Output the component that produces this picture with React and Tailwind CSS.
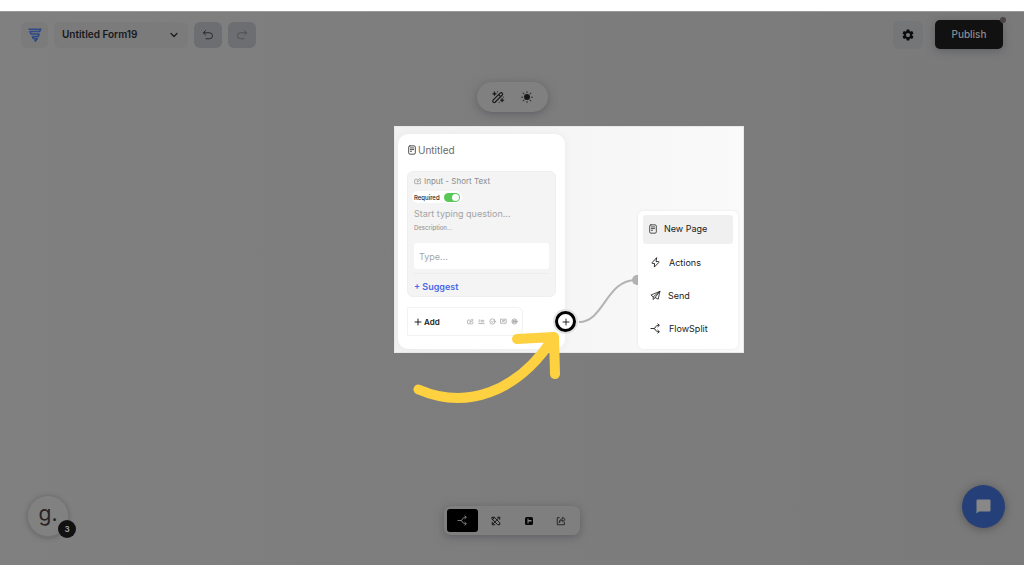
import { ChevronDown } from "lucide-react";
import { MdSettings } from "react-icons/md";
import { BsSunFill } from "react-icons/bs";

function Svg({ children, className = "", width = 1.8 }) {
  return (
    <svg viewBox="0 0 24 24" fill="none" stroke="currentColor" strokeWidth={width} strokeLinecap="round" strokeLinejoin="round" className={className} aria-hidden="true">
      {children}
    </svg>
  );
}

function LogoMark() {
  return (
    <svg viewBox="0 0 28 28" className="h-[14px] w-[14px]" fill="none" stroke="#2f4a86" strokeWidth="3.4" strokeLinejoin="round" aria-hidden="true">
      <path d="M1 2.500h26M24.500 2.500l-1 4.500H4l2 5h16l-1.500 5H9l1.500 4h8L15 26l-1.500-3" />
    </svg>
  );
}

function PageIcon({ className }) {
  return (
    <Svg className={className} width={2.2}>
      <rect x="4" y="2" width="16" height="20" rx="3" />
      <path d="M8 7h8M8 11h8M8 15h3" />
    </Svg>
  );
}

function EditIcon({ className }) {
  return (
    <Svg className={className} width={2}>
      <path d="M10 7H4a2 2 0 0 0-2 2v9a2 2 0 0 0 2 2h14a2 2 0 0 0 2-2v-5" />
      <path d="M10 14l1-4 7-6 3 3-7 6z" />
    </Svg>
  );
}

function WandIcon() {
  return (
    <Svg className="h-[14px] w-[14px]" width={2}>
      <path d="M3.500 17.500 16 5a2.500 2.500 0 0 1 3.500 3.500L7 21a2.500 2.500 0 0 1-3.500-3.500zM13 8l3.500 3.500" />
      <path d="M6 3l1 2.500L9.500 6.500 7 7.500 6 10 5 7.500 2.500 6.500 5 5.500zM19 14l1 2.500 2.500 1-2.500 1-1 2.500-1-2.500-2.500-1 2.500-1z" fill="currentColor" strokeWidth="0.8" />
      <path d="M11 3h.1M21 12h.1M14 21h.1" />
    </Svg>
  );
}

function SplitIcon({ className }) {
  return (
    <Svg className={className} width={2}>
      <path d="M2 12h7c3 0 3-7 8-7h2M9 12c3 0 3 7 8 7h2" />
      <path d="M17 2l3.500 3L17 8M17 16l3.500 3-3.500 3" />
    </Svg>
  );
}

function BoltIcon({ className }) {
  return (
    <Svg className={className} width={2}>
      <path d="M14 2 4.500 12.500c-.6.700-.2 1.500.7 1.500H10l-.5 8L19.500 11.500c.6-.7.2-1.500-.7-1.500H14z" />
    </Svg>
  );
}

function SendIcon({ className }) {
  return (
    <Svg className={className} width={1.8}>
      <path d="M21.500 3 2 11l5 4 14.500-12L18 20l-7-3.500L21.500 3M7 15v6l4-4.500" />
    </Svg>
  );
}

const actions = [
  { label: "Actions", Icon: BoltIcon, gap: "gap-2 pl-[7px]" },
  { label: "Send", Icon: SendIcon, gap: "gap-[7px] pl-[7px]" },
  { label: "FlowSplit", Icon: SplitIcon, gap: "gap-2 pl-[7px]" },
];

function Header() {
  return (
    <header className="flex items-center justify-between pt-[8px] pr-[21px] pl-[21px]">
      <div className="flex items-center gap-[6px]">
        <a href="#home" aria-label="Home" className="flex h-[26px] w-[27px] items-center justify-center rounded-[6px] bg-[#7b7b7b]">
          <LogoMark />
        </a>
        <button className="flex h-[26px] w-[134px] items-center justify-between rounded-[6px] bg-[#7b7b7b] pr-2 pl-2 text-[10px] font-semibold text-[#18181b]">
          Untitled Form19
          <ChevronDown className="h-3 w-3" strokeWidth={2.4} />
        </button>
        <button aria-label="Undo" className="flex h-[26px] w-[28px] items-center justify-center rounded-[6px] bg-[#6d6e71] text-[#222]">
          <Svg className="h-3 w-3"><path d="M7 3 3 7.500 7 12M3 7.500h12a6 6 0 0 1 0 12H8" /></Svg>
        </button>
        <button aria-label="Redo" className="flex h-[26px] w-[28px] items-center justify-center rounded-[6px] bg-[#6d6e71] text-[#4d4e50]">
          <Svg className="h-3 w-3"><path d="M17 3l4 4.500L17 12M21 7.500H9a6 6 0 0 0 0 12h7" /></Svg>
        </button>
      </div>
      <div className="flex items-center gap-3">
        <button aria-label="Settings" className="flex h-[28px] w-[30px] items-center justify-center rounded-[6px] bg-[#757678] text-[#0c0c0c]">
          <MdSettings className="h-[14px] w-[14px]" />
        </button>
        <button className="relative h-[29px] w-[68px] rounded-[5px] bg-[#111112] text-[10px] font-medium text-[#8c8c8c] shadow-[0_2px_8px_rgba(70,72,84,0.5)]">
          Publish
          <span className="absolute -top-[3px] -right-[3px] h-[6px] w-[6px] rounded-full bg-[#4b4346]" />
        </button>
      </div>
    </header>
  );
}

function FormCard() {
  return (
    <section className="mt-2 ml-1 w-[167px] rounded-[10px] bg-white px-[9px] pt-[8px] pb-[13px] shadow-[0_0_10px_rgba(0,0,0,0.05)]">
      <h2 className="flex h-4 items-center gap-px text-[10px] text-[#6a6a6a]">
        <PageIcon className="h-[10px] w-[10px] text-[#444]" />
        Untitled
      </h2>
      <div className="mt-[13px] h-[126px] rounded-[6px] border border-[#efefef] bg-[#f4f4f4] px-[6px] pt-[3px]">
        <div className="flex h-3 items-center gap-[2px] text-[8px] text-[#8c8c8c]">
          <EditIcon className="h-2 w-2" />
          Input - Short Text
        </div>
        <label className="mt-1 -ml-[2px] flex h-3 w-[50px] items-center gap-1 rounded-full bg-white pl-[2px] text-[6px] font-medium text-[#222]">
          Required
          <input type="checkbox" defaultChecked className="peer sr-only" />
          <span className="flex h-[9px] w-[16px] shrink-0 items-center justify-end rounded-full bg-[#58c856] px-px">
            <span className="h-[7px] w-[7px] rounded-full bg-white" />
          </span>
        </label>
        <input aria-label="Question" placeholder="Start typing question..." className="mt-1 block h-[13px] w-full bg-transparent text-[9px] placeholder:text-[#a3a3a3]" />
        <input aria-label="Description" placeholder="Description..." className="mt-[2px] block h-[10px] w-full bg-transparent text-[6px] font-medium placeholder:text-[#999]" />
        <input aria-label="Answer" placeholder="Type..." className="mt-[11px] block h-[26px] w-full rounded-[3px] bg-white px-[5px] text-[9px] placeholder:text-[#a6a6a6]" />
        <div className="mt-1 border-t border-[#ececec]" />
        <button className="mt-[6px] block text-[9px] leading-[14px] font-semibold text-[#4a67e8]">+ Suggest</button>
      </div>
      <div className="mt-[10px] flex h-[29px] w-[116px] items-center justify-between rounded-r-[6px] border border-[#f2f2f2] pr-1 pl-[6px]">
        <button className="flex items-center gap-[2px] text-[8px] font-semibold text-[#222]">
          <Svg className="h-2 w-2" width={3}><path d="M12 3v18M3 12h18" /></Svg>
          Add
        </button>
        <div className="flex items-center gap-1 text-[#888]">
          <EditIcon className="h-[7px] w-[7px]" />
          <Svg className="h-[7px] w-[7px]" width={2}><path d="M4 6v8M3 19h18M10 8h10M10 13h10" /></Svg>
          <Svg className="h-[7px] w-[7px]" width={2}><circle cx="12" cy="12" r="9" /><path d="m8 12 3 3 5-6" /></Svg>
          <Svg className="h-[7px] w-[7px]" width={2}><path d="M3 4h18v14h-6l-3 3-3-3H3zM8 9h8M8 13h6" /></Svg>
          <Svg className="h-[7px] w-[7px]" width={2}><circle cx="12" cy="12" r="9" /><path d="M8 8h8v8H8zM8 12h8" /></Svg>
        </div>
      </div>
    </section>
  );
}

function Flow() {
  return (
    <div className="absolute top-[114px] left-[calc(50%-118px)] h-[227px] w-[350px] border border-[#e9e9e9] bg-[#f7f7f7] bg-linear-to-r from-[#f2f2f2] to-[#fafafa]">
      <div className="-mt-px -ml-px flex">
        <FormCard />
      </div>
      <svg viewBox="394 126 350 300" className="absolute -top-px -left-px h-[300px] w-[350px]" fill="none" aria-hidden="true">
        <path d="M579 322C604 322 606 280 636 280" stroke="#b3b3b3" strokeWidth="2" />
        <circle cx="637" cy="280" r="5" fill="#b3b3b3" />
        <path d="M418.500 389.500C466 410 516 393 552 340M517 339l37-2 1 37" stroke="#fed141" strokeWidth="10" strokeLinecap="round" strokeLinejoin="round" />
      </svg>
      <button aria-label="Add step" className="absolute top-[184px] left-[160px] flex h-[21px] w-[21px] items-center justify-center rounded-full border-3 border-black bg-white text-black ring-2 ring-[#e2e2e2]">
        <Svg className="h-2 w-2 shrink-0" width={2.5}><path d="M12 3v18M3 12h18" /></Svg>
      </button>
      <nav className="absolute top-[84px] left-[243px] flex w-[100px] flex-col gap-1 rounded-[5px] bg-white px-[5px] pt-[4px] pb-[6px] text-[9px] text-[#222] shadow-[0_0_3px_rgba(0,0,0,0.08)]">
        <button className="flex h-[29px] items-center gap-[6px] rounded-[3px] bg-[#f0f0f0] pb-px pl-[5px]">
          <PageIcon className="h-[10px] w-[10px] text-[#444]" />
          New Page
        </button>
        {actions.map(({ label, Icon, gap }) => (
          <button key={label} className={`flex h-[29px] items-center ${gap}`}>
            <Icon className="h-[11px] w-[11px]" />
            {label}
          </button>
        ))}
      </nav>
    </div>
  );
}

function Dock() {
  return (
    <nav className="flex items-center rounded-[7px] bg-[#7f7f7f] p-[3px] text-[#171717] shadow-[0_2px_9px_rgba(65,67,80,0.5)]">
      <button aria-label="Flow" className="flex h-[23px] w-[31px] items-center justify-center rounded-[3px] bg-black text-[#858585]">
        <SplitIcon className="h-[11px] w-[11px]" />
      </button>
      <button aria-label="Design" className="flex h-[23px] w-[35px] items-center justify-center">
        <Svg className="h-[10px] w-[10px]" width={2.4}><path d="M3 3h5l13 13v5h-5L3 8zM20 3 4 20M16 3h5v5M3 15v6h6M8 3l-3 5" /></Svg>
      </button>
      <button aria-label="Integrations" className="flex h-[23px] w-[31px] items-center justify-center">
        <svg viewBox="0 0 16 16" className="h-2 w-2" aria-hidden="true">
          <rect width="16" height="16" rx="3" fill="#080808" />
          <path d="M5 3h2v10H5zM7 6h6v3H7z" fill="#858585" />
        </svg>
      </button>
      <button aria-label="Share" className="flex h-[23px] w-[33px] items-center justify-center">
        <Svg className="h-[10px] w-[10px]" width={2}><path d="M8 4H3v17h17v-6M8 15c0-6 4-8 8-8V3l6 5.500-6 5v-3c-4 0-6 1-8 4.500z" /></Svg>
      </button>
    </nav>
  );
}

export default function App() {
  return (
    <div className="flex min-h-screen flex-col bg-white pt-[11px] pb-[11px] font-[Inter,'Open_Sans',sans-serif]">
      <main className="relative flex flex-1 flex-col border-t border-[#999] bg-linear-to-r from-[#808080] to-[#7a7a7a]">
        <Header />
        <div className="flex flex-1 flex-col items-center justify-between pt-[33px] pb-[30px]">
          <div className="flex h-[30px] w-[71px] items-center justify-center gap-4 rounded-full bg-[#808080] pr-px text-[#171717] shadow-[0_2px_9px_rgba(65,67,80,0.5)]">
            <button aria-label="Generate"><WandIcon /></button>
            <button aria-label="Theme"><BsSunFill className="h-[12px] w-[12px]" /></button>
          </div>
          <Dock />
        </div>
        <Flow />
        <button aria-label="Guide, 3 items" className="absolute bottom-[28px] left-[27px] flex h-[42px] w-[42px] items-center justify-center rounded-full border border-[#747474] bg-[#818181] pb-1 text-[21px] text-[#292323] shadow-[0_1px_5px_rgba(60,60,60,0.4)]">
          g.
          <span className="absolute -right-[8px] -bottom-[2px] flex h-[18px] w-[18px] items-center justify-center rounded-full bg-[#111] text-[8px] font-bold text-[#999]">3</span>
        </button>
        <button aria-label="Chat" className="absolute right-[19px] bottom-[37px] flex h-[43px] w-[43px] items-center justify-center rounded-full bg-[#254079] shadow-[0_1px_9px_rgba(45,45,45,0.5)]">
          <svg viewBox="0 0 15 15" className="h-[15px] w-[15px]" aria-hidden="true">
            <path d="M1.500 0.500h12a1 1 0 0 1 1 1v10a1 1 0 0 1-1 1H3l-2.500 2v-13a1 1 0 0 1 1-1z" fill="#888" />
          </svg>
        </button>
      </main>
    </div>
  );
}
